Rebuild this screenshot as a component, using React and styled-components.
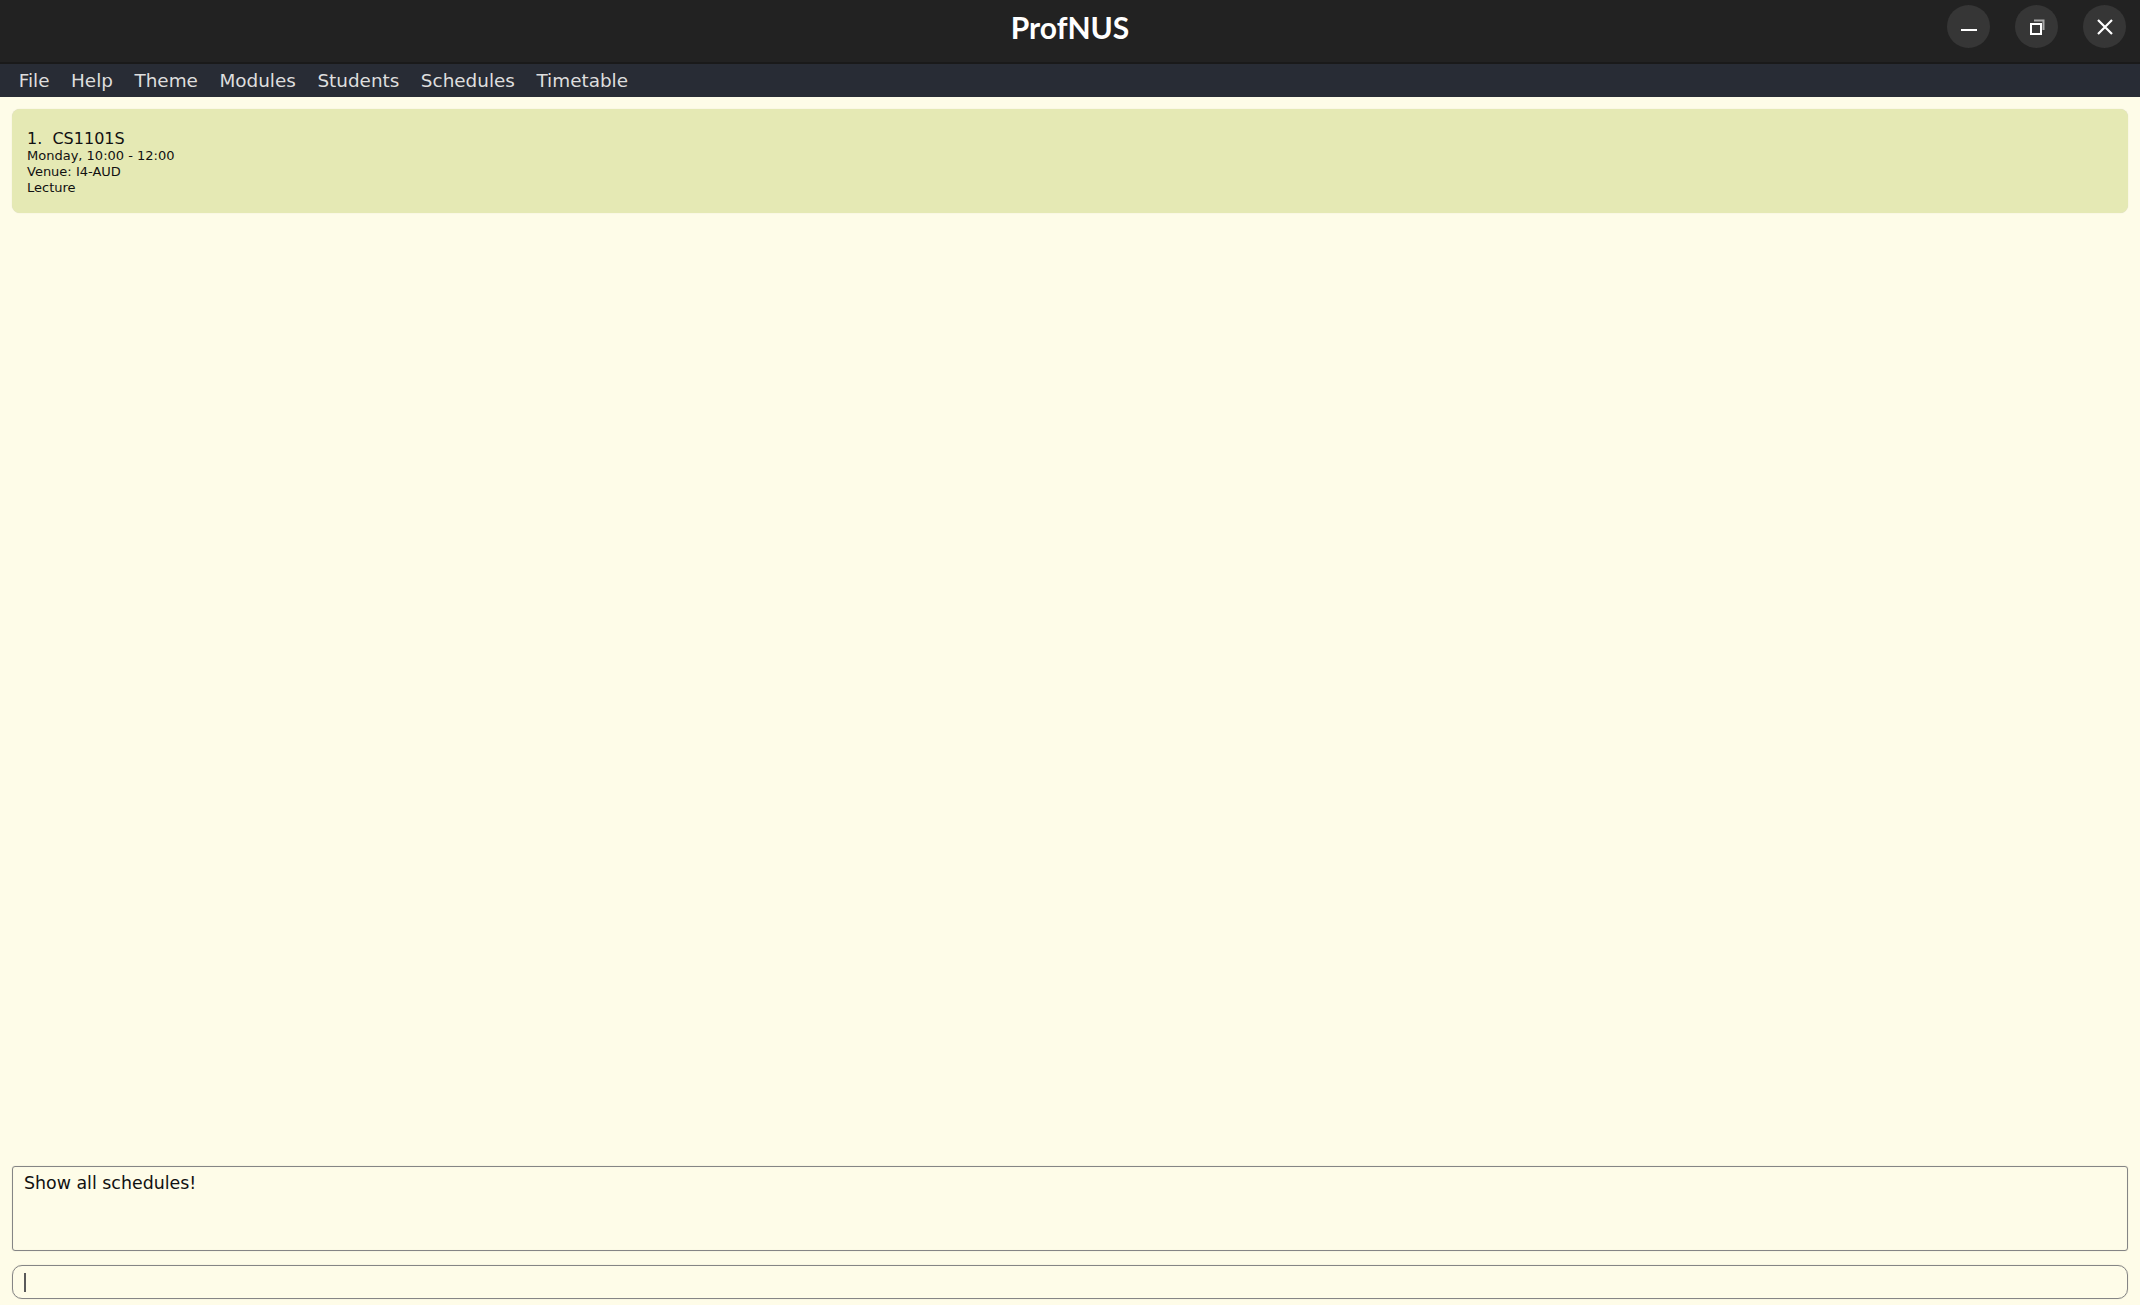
import React from "react";
import styled, { createGlobalStyle } from "styled-components";

const GlobalStyle = createGlobalStyle`
    * {
        box-sizing: border-box;
    }

    html, body {
        margin: 0;
        padding: 0;
        overflow: hidden;
        background: #fefce8;
    }
`;

const Window = styled.div`
    display: flex;
    flex-direction: column;
    width: 2140px;
    height: 1305px;
    background: #fefce8;
    font-family: "DejaVu Sans", sans-serif;
`;

const TitleBar = styled.div`
    display: grid;
    grid-template-columns: 1fr auto 1fr;
    align-items: center;
    height: 64px;
    padding: 0 14px 9px;
    background: #222222;
    border-bottom: 2px solid #1a1a1a;
`;

const Title = styled.div`
    grid-column: 2;
    font-family: "Lato", "Open Sans", sans-serif;
    font-weight: 700;
    font-size: 30px;
    line-height: 36px;
    color: #ffffff;
`;

const Controls = styled.div`
    grid-column: 3;
    justify-self: end;
    display: flex;
    gap: 25px;
`;

const CircleButton = styled.div`
    display: flex;
    align-items: center;
    justify-content: center;
    width: 43px;
    height: 43px;
    border-radius: 50%;
    background: #363636;
`;

const MenuBar = styled.div`
    display: flex;
    align-items: center;
    height: 33px;
    padding-left: 8px;
    background: #282c35;
`;

const MenuItem = styled.div`
    padding: 0 10.75px;
    font-size: 18.4px;
    line-height: 22px;
    color: #dedede;
`;

const Main = styled.div`
    display: flex;
    flex-direction: column;
    flex: 1;
    min-height: 0;
    padding: 12px 12px 6px;
`;

const List = styled.div`
    display: flex;
    flex-direction: column;
    flex: 1;
    min-height: 0;
`;

const Card = styled.div`
    padding: 21px 15px 17px;
    border-radius: 8px;
    background: #e5e9b4;
    box-shadow: 0 0 1px rgba(0, 0, 0, 0.18);
    color: #111111;
`;

const CardTitle = styled.div`
    font-size: 16px;
    line-height: 18px;
    white-space: pre;
`;

const CardLine = styled.div`
    font-size: 13px;
    line-height: 16px;
`;

const ResultBox = styled.div`
    height: 85px;
    margin-top: 14px;
    padding: 6px 11px;
    border: 1px solid #858585;
    border-radius: 3px;
    box-shadow: 0 0 1px rgba(0, 0, 0, 0.25), inset 0 0 1px rgba(0, 0, 0, 0.1);
    font-size: 17.4px;
    line-height: 20px;
    color: #111111;
`;

const CommandBox = styled.div`
    display: flex;
    align-items: center;
    height: 34px;
    margin-top: 14px;
    padding-left: 11px;
    border: 1px solid #858585;
    border-radius: 10px;
    box-shadow: 0 0 1px rgba(0, 0, 0, 0.25);
`;

const Caret = styled.span`
    width: 2px;
    height: 19px;
    background: #5a5a5a;
`;

const menus = ["File", "Help", "Theme", "Modules", "Students", "Schedules", "Timetable"];

const schedules = [
    {
        module: "CS1101S",
        time: "Monday, 10:00 - 12:00",
        venue: "I4-AUD",
        type: "Lecture",
    },
];

const App = () => {
    return (
        <Window>
            <GlobalStyle />
            <TitleBar>
                <Title>ProfNUS</Title>
                <Controls>
                    <CircleButton>
                        <svg width="16" height="16" viewBox="0 0 16 16">
                            <rect x="0" y="10" width="16" height="2" fill="#ffffff" />
                        </svg>
                    </CircleButton>
                    <CircleButton>
                        <svg width="16" height="16" viewBox="0 0 16 16">
                            <path d="M5 1.5 H14.5 V11" fill="none" stroke="#a8a8a8" strokeWidth="2" />
                            <rect x="2" y="5" width="10" height="10" fill="none" stroke="#ffffff" strokeWidth="2" />
                        </svg>
                    </CircleButton>
                    <CircleButton>
                        <svg width="16" height="16" viewBox="0 0 16 16">
                            <path d="M1 1 L15 15 M15 1 L1 15" stroke="#ffffff" strokeWidth="2.2" />
                        </svg>
                    </CircleButton>
                </Controls>
            </TitleBar>
            <MenuBar>
                {menus.map((m) => (
                    <MenuItem key={m}>{m}</MenuItem>
                ))}
            </MenuBar>
            <Main>
                <List>
                    {schedules.map((s, i) => (
                        <Card key={s.module}>
                            <CardTitle>{`${i + 1}.  ${s.module}`}</CardTitle>
                            <CardLine>{s.time}</CardLine>
                            <CardLine>Venue: {s.venue}</CardLine>
                            <CardLine>{s.type}</CardLine>
                        </Card>
                    ))}
                </List>
                <ResultBox>Show all schedules!</ResultBox>
                <CommandBox>
                    <Caret />
                </CommandBox>
            </Main>
        </Window>
    );
};

export default App;
